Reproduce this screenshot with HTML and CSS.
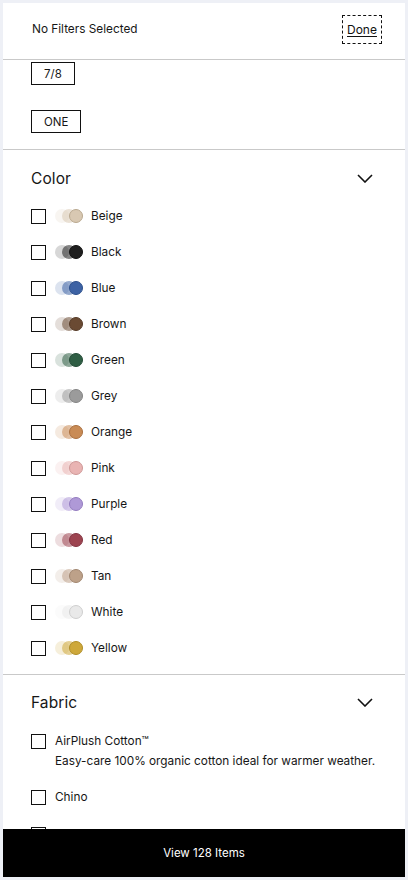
FILE: index.html
```html
<!DOCTYPE html>
<html>
<head>
<meta charset="utf-8">
<link rel="stylesheet" href="styles.css">
</head>
<body>
<div class="panel">
  <div class="header">
    <span class="status">No Filters Selected</span>
    <button class="done">Done</button>
  </div>
  <div class="sizes">
    <span class="size-chip">7/8</span>
    <span class="size-chip">ONE</span>
  </div>
  <div class="section">
    <div class="section-head">
      <span class="section-title">Color</span>
      <svg class="chev" width="16" height="9" viewBox="0 0 16 9"><path d="M1 1 L8 8 L15 1" fill="none" stroke="#111" stroke-width="1.6"/></svg>
    </div>
    <ul class="colors">
      <li class="row"><span class="box"></span><span class="sw" style="--c:#d8c8b2;--b:#b9a88f"><i></i><i></i><i></i></span><span class="lbl">Beige</span></li>
      <li class="row"><span class="box"></span><span class="sw" style="--c:#1f1f1f;--b:#111"><i></i><i></i><i></i></span><span class="lbl">Black</span></li>
      <li class="row"><span class="box"></span><span class="sw" style="--c:#3d62a4;--b:#2c4f8c"><i></i><i></i><i></i></span><span class="lbl">Blue</span></li>
      <li class="row"><span class="box"></span><span class="sw" style="--c:#6a4a33;--b:#553a27"><i></i><i></i><i></i></span><span class="lbl">Brown</span></li>
      <li class="row"><span class="box"></span><span class="sw" style="--c:#2f5e44;--b:#234b36"><i></i><i></i><i></i></span><span class="lbl">Green</span></li>
      <li class="row"><span class="box"></span><span class="sw" style="--c:#9b9b9b;--b:#848484"><i></i><i></i><i></i></span><span class="lbl">Grey</span></li>
      <li class="row"><span class="box"></span><span class="sw" style="--c:#c98b55;--b:#a96f3f"><i></i><i></i><i></i></span><span class="lbl">Orange</span></li>
      <li class="row"><span class="box"></span><span class="sw" style="--c:#e9b4b3;--b:#cf9897"><i></i><i></i><i></i></span><span class="lbl">Pink</span></li>
      <li class="row"><span class="box"></span><span class="sw" style="--c:#af99d7;--b:#947cc0"><i></i><i></i><i></i></span><span class="lbl">Purple</span></li>
      <li class="row"><span class="box"></span><span class="sw" style="--c:#9d4450;--b:#843543"><i></i><i></i><i></i></span><span class="lbl">Red</span></li>
      <li class="row"><span class="box"></span><span class="sw" style="--c:#bda189;--b:#a18670"><i></i><i></i><i></i></span><span class="lbl">Tan</span></li>
      <li class="row"><span class="box"></span><span class="sw" style="--c:#e9e9e9;--b:#cfcfcf"><i></i><i></i><i></i></span><span class="lbl">White</span></li>
      <li class="row"><span class="box"></span><span class="sw" style="--c:#cea83a;--b:#b08e27"><i></i><i></i><i></i></span><span class="lbl">Yellow</span></li>
    </ul>
  </div>
  <div class="section fabric">
    <div class="section-head">
      <span class="section-title">Fabric</span>
      <svg class="chev" width="16" height="9" viewBox="0 0 16 9"><path d="M1 1 L8 8 L15 1" fill="none" stroke="#111" stroke-width="1.6"/></svg>
    </div>
    <ul class="fabrics">
      <li class="frow">
        <span class="box"></span>
        <div class="ftext">
          <span class="lbl">AirPlush Cotton™</span>
          <span class="desc">Easy-care 100% organic cotton ideal for warmer weather.</span>
        </div>
      </li>
      <li class="frow"><span class="box"></span><div class="ftext"><span class="lbl">Chino</span></div></li>
      <li class="frow"><span class="box"></span><div class="ftext"><span class="lbl">Cotton</span></div></li>
    </ul>
  </div>
  <div class="cta">View 128 Items</div>
</div>
</body>
</html>
```
FILE: styles.css
```css
* { box-sizing: border-box; }
html, body { margin: 0; padding: 0; }
body {
  background: #eef0f6;
  font-family: Inter, "Noto Sans", sans-serif;
  color: #161616;
  width: 408px;
  height: 880px;
  overflow: hidden;
}
.panel {
  position: relative;
  margin: 3px 3px 0 3px;
  height: 874px;
  background: #fff;
  overflow: hidden;
}
.header {
  height: 57px;
  display: flex;
  align-items: center;
  justify-content: space-between;
  padding: 0 23px 4px 29px;
  border-bottom: 1px solid #c9c9c9;
}
.status { font-size: 11.8px; }
.done {
  width: 40px;
  height: 29px;
  border: 1px dashed #111;
  background: #fff;
  font-family: inherit;
  font-size: 12px;
  color: #111;
  text-decoration: underline;
  text-underline-offset: 2px;
  padding: 0;
  margin-top: 0;
}
.sizes {
  display: flex;
  flex-direction: column;
  align-items: flex-start;
  gap: 25px;
  padding: 2px 0 16px 28px;
  border-bottom: 1px solid #c9c9c9;
}
.size-chip {
  display: flex;
  align-items: center;
  justify-content: center;
  height: 23px;
  padding: 0 12px;
  border: 1px solid #111;
  font-size: 11.5px;
}
.section-head {
  display: flex;
  align-items: center;
  justify-content: space-between;
  height: 24px;
  padding: 0 32px 0 28px;
}
.section-title { font-size: 15.5px; letter-spacing: 0.1px; }
.chev { display: block; margin-top: 1px; }
.section { padding-top: 16px; }
ul { list-style: none; margin: 0; padding: 0; }
.colors { padding: 8px 0 8px 28px; border-bottom: 1px solid #c9c9c9; }
.row {
  display: flex;
  align-items: center;
  height: 36px;
}
.box {
  width: 15px;
  height: 15px;
  border: 1px solid #111;
  flex: none;
}
.sw {
  position: relative;
  display: block;
  width: 29px;
  height: 14px;
  margin-left: 9px;
  margin-right: 7px;
}
.sw i {
  position: absolute;
  top: 0;
  width: 14px;
  height: 14px;
  border-radius: 50%;
  background: var(--c);
}
.sw i:nth-child(1) { left: 0; opacity: 0.18; }
.sw i:nth-child(2) { left: 7px; opacity: 0.55; }
.sw i:nth-child(3) { left: 14px; border: 1px solid var(--b); }
.lbl { font-size: 11.8px; }
.fabric { padding-top: 15px; }
.fabrics { padding: 10px 0 0 28px; }
.frow {
  display: flex;
  align-items: flex-start;
  padding: 10px 0 12px;
}
.ftext {
  display: flex;
  flex-direction: column;
  gap: 6px;
  margin-left: 9px;
  line-height: 14px;
}
.desc { font-size: 11.8px; }
.cta {
  position: absolute;
  left: 0;
  right: 0;
  bottom: 0;
  height: 48px;
  background: #000;
  color: #fff;
  display: flex;
  align-items: center;
  justify-content: center;
  font-size: 11.5px;
}
```
